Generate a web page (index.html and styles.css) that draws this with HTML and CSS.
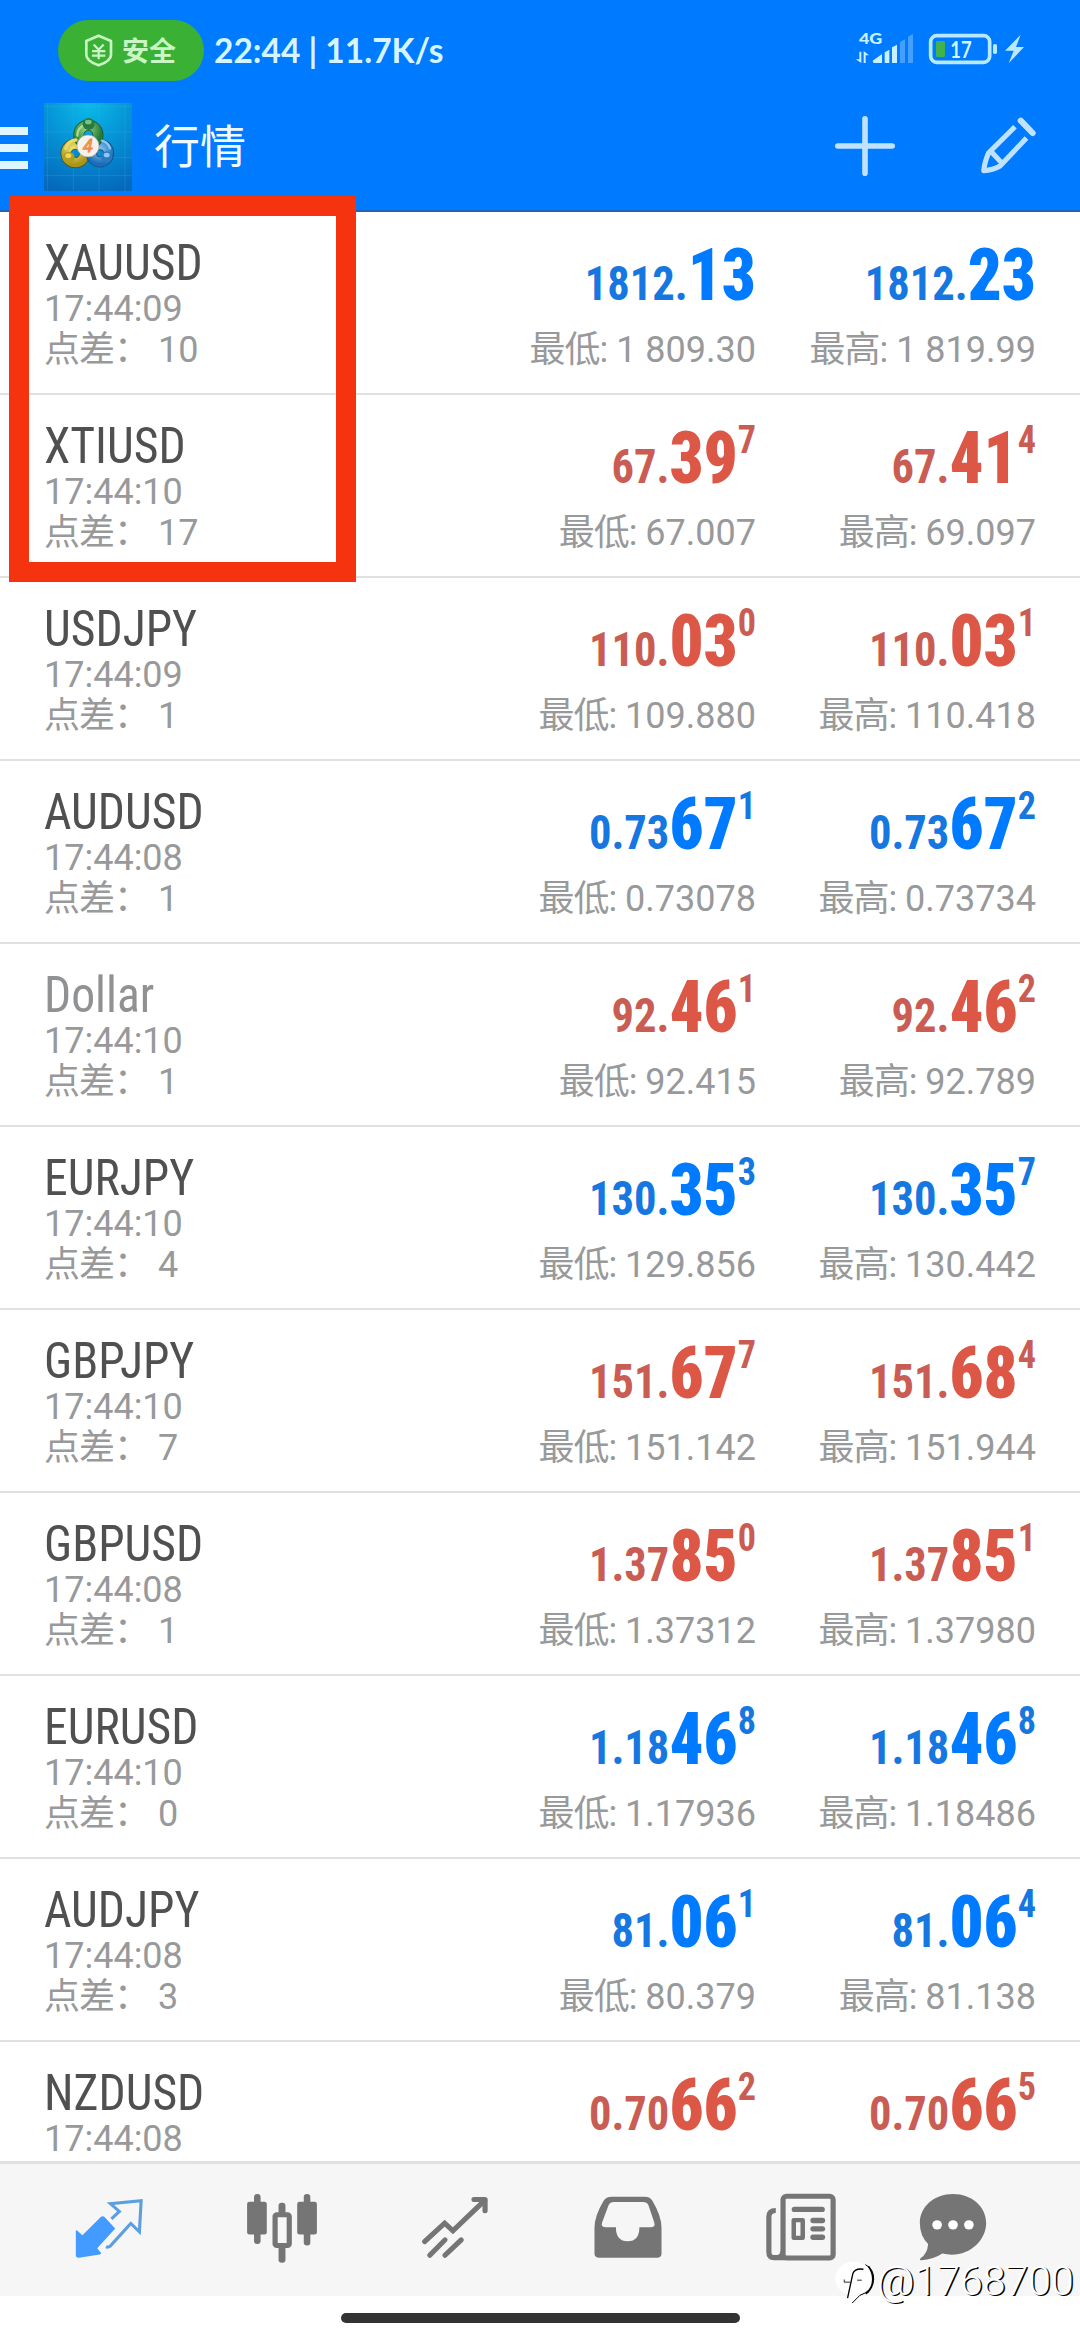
FILE: index.html
```html
<!DOCTYPE html>
<html lang="zh-CN">
<head>
<meta charset="utf-8">
<title>行情</title>
<link rel="stylesheet" href="styles.css">
</head>
<body>
<div class="screen">
  <header class="header">
    <div class="status">
      <div class="pill">
        <svg class="shield" viewBox="246 98 84 98" preserveAspectRatio="none" fill="none" stroke="#c8f7c4" stroke-width="8" stroke-linejoin="round"><path d="M287 103 L324 119 V160 Q324 178 287 191 Q250 178 250 160 V119 Z"/><path d="M272 129 L287 145 L302 129 M287 145 V173 M267 149 H307 M267 162 H307" stroke-width="6.5"/></svg>
        <span>安全</span>
      </div>
      <span class="clock">22:44 | 11.7K/s</span>
      <svg class="indicators" viewBox="0 0 540 150">
        <text x="27" y="56" font-family="Lato" font-weight="900" font-size="47" fill="#c9f0ff" textLength="70" lengthAdjust="spacingAndGlyphs">4G</text>
        <g fill="#c9f0ff"><path d="M28 80 H34 V114 L17 103 H28 Z M41 114 V78 L57 91 H47 V114 Z"/><path d="M68 107 L96 87 V114 H73 Q68 114 68 107Z M104 82 L118 74 V114 H104 Z M126 67 L141 59 V114 H126 Z"/></g>
        <g fill="#459fff"><path d="M150 51 L165 43 V114 H150 Z M174 35 L189 27 V114 H174 Z"/></g>
        <rect x="242" y="32" width="177" height="80" rx="18" fill="none" stroke="#b8e9ff" stroke-width="11"/>
        <rect x="258" y="48" width="27" height="48" rx="4" fill="#40b34c"/>
        <rect x="429" y="57" width="12" height="30" rx="5" fill="#b8e9ff"/>
        <text x="301" y="99" font-family="Lato" font-weight="700" font-size="70" fill="#d5f5ff" textLength="64" lengthAdjust="spacingAndGlyphs">17</text>
        <path d="M512 29 L465 77 H491 L476 115 L522 66 H498 Z" fill="#b8e9ff"/>
      </svg>
    </div>
    <div class="appbar">
      <div class="burger"><i></i><i></i><i></i></div>
      <svg class="logo" viewBox="12 14 264 264">
        <defs>
          <radialGradient id="bg" cx=".5" cy="0" r="1.05"><stop offset="0" stop-color="#0abbe9"/><stop offset=".5" stop-color="#0590d4"/><stop offset="1" stop-color="#0568bb"/></radialGradient>
          <radialGradient id="gr" cx=".4" cy=".2" r=".8"><stop offset="0" stop-color="#9bd77f"/><stop offset="1" stop-color="#217b3c"/></radialGradient>
          <radialGradient id="ye" cx=".4" cy=".3" r=".8"><stop offset="0" stop-color="#f5e87e"/><stop offset="1" stop-color="#a8951a"/></radialGradient>
          <radialGradient id="bl" cx=".5" cy=".3" r=".8"><stop offset="0" stop-color="#8ccbf5"/><stop offset="1" stop-color="#1a6db9"/></radialGradient>
        </defs>
        <rect x="12" y="14" width="264" height="264" fill="url(#bg)"/>
        <path d="M22 14 V278 M100 14 V278 M177 14 V278 M255 14 V278 M12 24 H276 M12 101 H276 M12 178 H276 M12 232 H276" stroke="#49b9e8" stroke-opacity=".35" stroke-width="2"/>
        <g stroke-linecap="round" fill="none">
          <circle cx="106" cy="165" r="28" stroke="#4d561c" stroke-width="33"/><circle cx="106" cy="165" r="28" stroke="url(#ye)" stroke-width="28"/>
          <circle cx="180" cy="165" r="26" stroke="#124f86" stroke-width="33"/><circle cx="180" cy="165" r="26" stroke="url(#bl)" stroke-width="28"/>
          <circle cx="145" cy="110" r="29" stroke="#1b5a36" stroke-width="33"/><circle cx="145" cy="110" r="29" stroke="url(#gr)" stroke-width="28"/>
          <path d="M77 150 A34 34 0 0 1 108 125" stroke="#e9dc65" stroke-width="10"/>
          <path d="M186 127 A34 34 0 0 1 210 150" stroke="#8dc9ef" stroke-width="7"/>
          <path d="M112 112 A33 33 0 0 1 126 84" stroke="#a9dc8c" stroke-width="7"/>
        </g>
        <circle cx="146" cy="77" r="18" fill="#267b3f"/><ellipse cx="145" cy="71" rx="10" ry="7" fill="#7cc183"/>
        <circle cx="86" cy="178" r="18" fill="#b39f1f"/><ellipse cx="85" cy="172" rx="9" ry="7" fill="#ecd75b"/>
        <circle cx="200" cy="176" r="17" fill="#2b78c5"/><ellipse cx="200" cy="170" rx="9" ry="7" fill="#8cc8f2"/>
        <circle cx="144" cy="143" r="33" fill="#f5f2ee" stroke="#a8a89a" stroke-width="2"/>
        <text x="144" y="162" text-anchor="middle" font-family="Roboto" font-size="54" font-style="italic" fill="#f6b27b" stroke="#ef8a45" stroke-width="3">4</text>
      </svg>
      <h1 class="title">行情</h1>
      <svg class="plus" viewBox="0 0 60 60"><path d="M2.8 30 H57.2 M30 2.8 V57.2" stroke="#bfe3ff" stroke-width="5.6" stroke-linecap="round"/></svg>
      <svg class="pencil" viewBox="1280 352 162 168" preserveAspectRatio="none" fill="none" stroke="#bfe3ff" stroke-width="15" stroke-linejoin="round"><path d="M1380 381 L1302 460 Q1290 490 1288 513 Q1315 511 1336 499 L1414 415 M1311 457 L1343 492"/><path d="M1397 363 L1432 400" stroke-width="18" stroke-linecap="round"/></svg>
    </div>
  </header>

  <main class="quotes">
    <section class="row">
      <div class="info"><div class="sym">XAUUSD</div><div class="sub">17:44:09</div><div class="sub"><i>点差：</i> 10</div></div>
      <div class="quote up"><div class="price">1812.<b>13</b></div><div class="sub"><i>最低:</i> 1 809.30</div></div>
      <div class="quote up"><div class="price">1812.<b>23</b></div><div class="sub"><i>最高:</i> 1 819.99</div></div>
    </section>
    <section class="row">
      <div class="info"><div class="sym">XTIUSD</div><div class="sub">17:44:10</div><div class="sub"><i>点差：</i> 17</div></div>
      <div class="quote down"><div class="price">67.<b>39</b><sup>7</sup></div><div class="sub"><i>最低:</i> 67.007</div></div>
      <div class="quote down"><div class="price">67.<b>41</b><sup>4</sup></div><div class="sub"><i>最高:</i> 69.097</div></div>
    </section>
    <section class="row">
      <div class="info"><div class="sym">USDJPY</div><div class="sub">17:44:09</div><div class="sub"><i>点差：</i> 1</div></div>
      <div class="quote down"><div class="price">110.<b>03</b><sup>0</sup></div><div class="sub"><i>最低:</i> 109.880</div></div>
      <div class="quote down"><div class="price">110.<b>03</b><sup>1</sup></div><div class="sub"><i>最高:</i> 110.418</div></div>
    </section>
    <section class="row">
      <div class="info"><div class="sym">AUDUSD</div><div class="sub">17:44:08</div><div class="sub"><i>点差：</i> 1</div></div>
      <div class="quote up"><div class="price">0.73<b>67</b><sup>1</sup></div><div class="sub"><i>最低:</i> 0.73078</div></div>
      <div class="quote up"><div class="price">0.73<b>67</b><sup>2</sup></div><div class="sub"><i>最高:</i> 0.73734</div></div>
    </section>
    <section class="row">
      <div class="info"><div class="sym idle">Dollar</div><div class="sub">17:44:10</div><div class="sub"><i>点差：</i> 1</div></div>
      <div class="quote down"><div class="price">92.<b>46</b><sup>1</sup></div><div class="sub"><i>最低:</i> 92.415</div></div>
      <div class="quote down"><div class="price">92.<b>46</b><sup>2</sup></div><div class="sub"><i>最高:</i> 92.789</div></div>
    </section>
    <section class="row">
      <div class="info"><div class="sym">EURJPY</div><div class="sub">17:44:10</div><div class="sub"><i>点差：</i> 4</div></div>
      <div class="quote up"><div class="price">130.<b>35</b><sup>3</sup></div><div class="sub"><i>最低:</i> 129.856</div></div>
      <div class="quote up"><div class="price">130.<b>35</b><sup>7</sup></div><div class="sub"><i>最高:</i> 130.442</div></div>
    </section>
    <section class="row">
      <div class="info"><div class="sym">GBPJPY</div><div class="sub">17:44:10</div><div class="sub"><i>点差：</i> 7</div></div>
      <div class="quote down"><div class="price">151.<b>67</b><sup>7</sup></div><div class="sub"><i>最低:</i> 151.142</div></div>
      <div class="quote down"><div class="price">151.<b>68</b><sup>4</sup></div><div class="sub"><i>最高:</i> 151.944</div></div>
    </section>
    <section class="row">
      <div class="info"><div class="sym">GBPUSD</div><div class="sub">17:44:08</div><div class="sub"><i>点差：</i> 1</div></div>
      <div class="quote down"><div class="price">1.37<b>85</b><sup>0</sup></div><div class="sub"><i>最低:</i> 1.37312</div></div>
      <div class="quote down"><div class="price">1.37<b>85</b><sup>1</sup></div><div class="sub"><i>最高:</i> 1.37980</div></div>
    </section>
    <section class="row">
      <div class="info"><div class="sym">EURUSD</div><div class="sub">17:44:10</div><div class="sub"><i>点差：</i> 0</div></div>
      <div class="quote up"><div class="price">1.18<b>46</b><sup>8</sup></div><div class="sub"><i>最低:</i> 1.17936</div></div>
      <div class="quote up"><div class="price">1.18<b>46</b><sup>8</sup></div><div class="sub"><i>最高:</i> 1.18486</div></div>
    </section>
    <section class="row">
      <div class="info"><div class="sym">AUDJPY</div><div class="sub">17:44:08</div><div class="sub"><i>点差：</i> 3</div></div>
      <div class="quote up"><div class="price">81.<b>06</b><sup>1</sup></div><div class="sub"><i>最低:</i> 80.379</div></div>
      <div class="quote up"><div class="price">81.<b>06</b><sup>4</sup></div><div class="sub"><i>最高:</i> 81.138</div></div>
    </section>
    <section class="row">
      <div class="info"><div class="sym">NZDUSD</div><div class="sub">17:44:08</div></div>
      <div class="quote down"><div class="price">0.70<b>66</b><sup>2</sup></div></div>
      <div class="quote down"><div class="price">0.70<b>66</b><sup>5</sup></div></div>
    </section>
  </main>

  <nav class="tabs">
    <svg viewBox="205 150 220 230" preserveAspectRatio="none"><path d="M219 272 Q221 268 225 273 L238 285 L292 230 Q297 226 302 231 L333 265 L281 324 L292 338 Q292 341 288 343 L228 352 Q219 353 219 346 Z" fill="#439bff"/><path d="M322 236 L345 214 L319 191 L408 182 L403 275 L378 250 L318 318 Q312 322 306 320" fill="none" stroke="#5a9fdf" stroke-width="9"/></svg>
    <svg viewBox="706 150 220 230" preserveAspectRatio="none" fill="#757575"><rect x="715" y="185" width="57" height="98" rx="7"/><rect x="735" y="162" width="19" height="149" rx="9"/><rect x="860" y="185" width="57" height="98" rx="7"/><rect x="879" y="162" width="19" height="154" rx="9"/><rect x="806" y="188" width="20" height="40" rx="9"/><rect x="806" y="310" width="20" height="57" rx="9"/><rect x="796" y="224" width="41" height="92" rx="5" fill="none" stroke="#757575" stroke-width="15"/></svg>
    <svg viewBox="1209 150 220 230" preserveAspectRatio="none" fill="none" stroke="#757575" stroke-width="15" stroke-linecap="round"><path d="M1231 304 L1289 249 L1313 272 L1405 181"/><path d="M1374 178.500 H1406 V212" stroke-linejoin="round"/><path d="M1246 345 L1290 299 M1290 345 L1337 299"/></svg>
    <svg viewBox="144 150 220 230" preserveAspectRatio="none" fill="#757575" fill-rule="evenodd"><path d="M207 170 H302 Q319 170 325 183 Q351 228 351 263 V340 Q351 352 340 352 H169 Q157 352 157 340 V263 Q157 228 183 183 Q190 170 207 170Z M213 186 Q202 186 198 195 L179 247 Q175 261 190 261 H219 Q219 303 253 303 Q287 303 287 261 H320 Q334 261 330 247 L313 195 Q309 186 298 186 Z"/></svg>
    <svg viewBox="648 150 220 230" preserveAspectRatio="none" fill="none" stroke="#757575" stroke-width="15"><rect x="706" y="169" width="145" height="184" rx="10"/><path d="M685 211 Q665 211 665 230 V335 Q665 352 680 352 H712"/><path d="M692 345 Q700 345 700 333" stroke-width="5"/><rect x="737" y="240" width="26" height="53" stroke-width="13" stroke-linejoin="round"/><path d="M739 208 H819 M793 241 H820 M793 266 H820 M793 291 H820" stroke-width="16" stroke-linecap="round"/></svg>
    <svg viewBox="1089 150 220 230" preserveAspectRatio="none"><path d="M1199 162 C1253 162 1295 200 1295 248 C1295 306 1238 357 1168 340 Q1142 358 1107 360 Q1101 360 1105 354 Q1125 340 1127 311 Q1103 288 1103 248 C1103 200 1145 162 1199 162Z" fill="#757575"/><circle cx="1153" cy="254" r="14" fill="#fff"/><circle cx="1199" cy="254" r="14" fill="#fff"/><circle cx="1245" cy="254" r="14" fill="#fff"/></svg>
  </nav>
  <footer class="home"><i></i></footer>

  <div class="marker"></div>
  <div class="watermark">
    <svg viewBox="45 35 130 130"><ellipse cx="100" cy="88" rx="54" ry="51" fill="#fff"/><g fill="none" stroke="#000"><path d="M137 46 Q163 60 162 90 Q161 125 120 139 L97 162" stroke-width="3"/><path d="M146 51 Q167 80 155 114 Q149 127 138 134 Q163 116 159 80" stroke-width="5"/><path d="M131 60 Q106 56 99 73 L83 147" stroke-width="4"/><path d="M73 91 V99 H91 M112 93 H126" stroke-width="2.500"/></g></svg>
    <span>@1768700</span>
  </div>
</div>
</body>
</html>
```
FILE: styles.css
```css
* { box-sizing: border-box; }

body { margin: 0; }

.screen {
  position: relative;
  display: flex;
  flex-direction: column;
  width: 1080px;
  height: 2340px;
  overflow: hidden;
  background: #fff;
  font-family: Roboto, "Noto Sans CJK SC", sans-serif;
}

svg { display: block; flex: none; overflow: visible; }

/* Header */
.header {
  height: 212px;
  background: #007aff;
  border-bottom: 2px solid #2263b9;
}

.status {
  display: flex;
  align-items: center;
  height: 100px;
  padding-left: 58px;
}

.pill {
  display: flex;
  align-items: center;
  gap: 9px;
  width: 146px;
  height: 61px;
  padding-left: 27px;
  border-radius: 31px;
  background: #3ab035;
  color: #c8f7c4;
  font: 700 27px/40px "Noto Sans CJK SC", sans-serif;
}

.shield { width: 28px; height: 33px; }

.clock {
  width: 240px;
  margin-left: 10px;
  color: #d5f5ff;
  font: 700 33.5px/40px Lato, sans-serif;
  white-space: nowrap;
}

.indicators {
  width: 180px;
  height: 50px;
  margin-left: 396px;
}

.appbar {
  display: flex;
  align-items: flex-start;
  height: 110px;
}

.burger {
  display: grid;
  gap: 9px;
  width: 28px;
  margin-top: 27px;
}

.burger i { height: 8px; background: #dff6ff; }

.logo { width: 88px; height: 88px; margin: 3px 0 0 16px; }

.title {
  flex: 1;
  margin: 10px 0 0 22px;
  color: #eefaff;
  font: 400 46px/66px "Noto Sans CJK SC", sans-serif;
}

.plus { width: 60px; height: 60px; margin-top: 16px; }

.pencil { width: 55px; height: 56px; margin: 17px 44px 0 86px; }

/* Quote list */
.quotes { height: 1949px; overflow: hidden; }

.row {
  display: grid;
  grid-template-columns: 1fr 300px 280px;
  height: 183px;
  padding: 1px 44px 0 44px;
  border-bottom: 2px solid #e1e1e1;
}

.info { padding-top: 25px; }

.sym {
  color: #505050;
  font: 400 50px/51px "Roboto Condensed", Roboto, sans-serif;
  transform: scaleX(.953);
  transform-origin: left;
}

.sym.idle { color: #909192; }

.sub {
  color: #98999a;
  font-size: 36px;
  line-height: 41px;
  white-space: pre;
}

.sub i { font-style: normal; letter-spacing: -1px; }

.quote { padding-top: 27px; text-align: right; }

.quote .sub { margin-top: 18px; }

.price {
  height: 72px;
  font: 700 48px/72px "Roboto Condensed", Roboto, sans-serif;
  white-space: nowrap;
  transform: scaleX(.928);
  transform-origin: right;
}

.price b { font-size: 72px; }

.price sup {
  font-size: 39px;
  line-height: 0;
  vertical-align: 30px;
}

.up { color: #1577df; }
.up b { color: #007aff; }
.down { color: #ca5d53; }
.down b { color: #dc5746; }

/* Bottom navigation */
.tabs {
  display: grid;
  grid-template-columns: repeat(5, 173px) 132px;
  justify-items: center;
  height: 135px;
  padding: 26px 0 0 22px;
  border-top: 3px solid #e1e1e1;
  background: #f6f6f6;
}

.tabs svg { width: 76px; height: 77px; }

.home {
  display: flex;
  justify-content: center;
  padding-top: 17px;
}

.home i {
  width: 399px;
  height: 10px;
  border-radius: 5px;
  background: #333;
}

/* Overlays */
.marker {
  position: absolute;
  left: 9px;
  top: 196px;
  width: 347px;
  height: 386px;
  border: 20px solid #f5330f;
}

.watermark {
  position: absolute;
  left: 835px;
  top: 2261px;
  display: flex;
  color: #fff;
  font: 300 41px/40px Roboto, sans-serif;
  text-shadow: 1.5px 1px 0 #000;
}

.watermark svg { width: 43px; height: 43px; }
.watermark span { margin-left: -1px; }
```
